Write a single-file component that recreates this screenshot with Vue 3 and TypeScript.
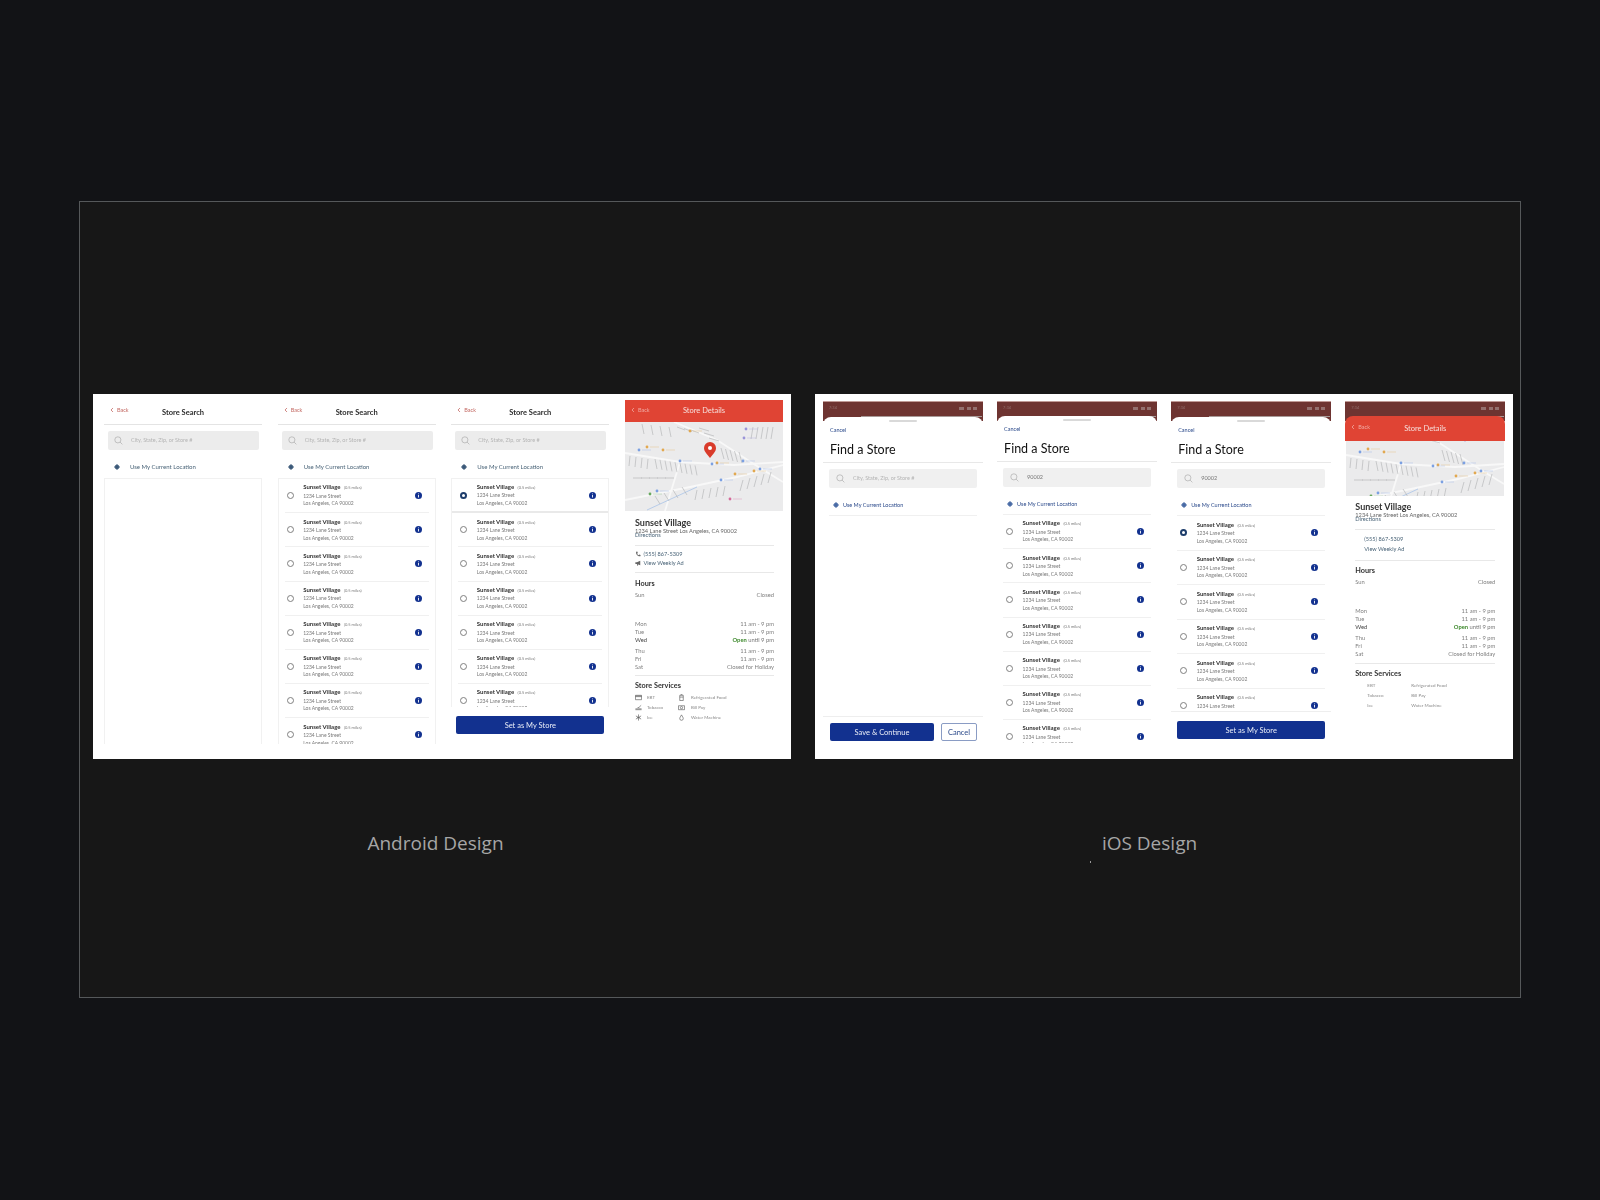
<script setup lang="ts">
type Screen = { rows: number; selected?: boolean; query?: string; cta?: string; mod: string }

const panels: { os: 'android' | 'ios'; screens: Screen[] }[] = [
  {
    os: 'android',
    screens: [
      { rows: 0, mod: 'empty' },
      { rows: 8, mod: 'full' },
      { rows: 7, selected: true, cta: 'Set as My Store', mod: 'picked' }
    ]
  },
  {
    os: 'ios',
    screens: [
      { rows: 0, mod: 'empty' },
      { rows: 7, query: '90002', mod: 'full' },
      { rows: 6, query: '90002', selected: true, cta: 'Set as My Store', mod: 'picked' }
    ]
  }
]

const hoursTop = [{ day: 'Sun', time: 'Closed' }]
const hours = [
  { day: 'Mon', time: '11 am - 9 pm' },
  { day: 'Tue', time: '11 am - 9 pm' },
  { day: 'Wed', time: 'until 9 pm', open: true },
  { day: 'Thu', time: '11 am - 9 pm' },
  { day: 'Fri', time: '11 am - 9 pm' },
  { day: 'Sat', time: 'Closed for Holiday' }
]

const services = [
  { name: 'EBT', d: 'M0.5 1.5h7v5h-7z M0.5 3h7 M.5 2.2h7' },
  { name: 'Refrigerated Food', d: 'M2 1.5h4v6H2z M2 3.5h4 M3 .5h2' },
  { name: 'Tobacco', d: 'M.5 6.5h7 M.5 5.5h7 M3 4h2 M5 3c1-1 1.5-.5 2-1.5' },
  { name: 'Bill Pay', d: 'M.5 2h7v4.5h-7z M4 4.2m-1.3 0a1.3 1.3 0 1 0 2.6 0a1.3 1.3 0 1 0-2.6 0' },
  { name: 'Ice', d: 'M4 .5v7 M1 2.2l6 3.6 M7 2.2l-6 3.6 M2.5 4h3' },
  { name: 'Water Machine', d: 'M4 1C3 3 2 4 2 5.2a2 2 0 0 0 4 0C6 4 5 3 4 1z' }
]

// street blocks on the map, drawn as runs of short parallel strokes
const blocks = [
  { x: 17, y: 2, n: 4, dx: 9, dy: 1, a: 2, b: 10 },
  { x: 52, y: 5, n: 3, dx: 7, dy: 1.5, a: 8, b: 3 },
  { x: 96, y: 26, n: 5, dx: 4.5, dy: 1, a: 3, b: 11 },
  { x: 30, y: 37, n: 9, dx: 5, dy: 0.8, a: 2, b: 10 },
  { x: 5, y: 34, n: 4, dx: 6, dy: 1, a: -1, b: 10 },
  { x: 128, y: 5, n: 5, dx: 5, dy: 0, a: -2, b: 12 },
  { x: 118, y: 58, n: 5, dx: 7, dy: -2, a: -3, b: 11 },
  { x: 72, y: 68, n: 5, dx: 7, dy: -1, a: -2, b: 10 },
  { x: 8, y: 56, n: 5, dx: 8, dy: 0, a: 9, b: 0 },
  { x: 74, y: 6, n: 3, dx: 5, dy: 5, a: 10, b: 3 },
  { x: 30, y: 74, n: 4, dx: 9, dy: -3, a: 5, b: 8 }
]
const streets = blocks.flatMap((b) =>
  Array.from({ length: b.n }, (_, i) => {
    const x = b.x + i * b.dx
    const y = b.y + i * b.dy
    return `M${x} ${y}l${b.a} ${b.b}`
  })
)

const pois = [
  { x: 65, y: 9, c: '#e2a84f' }, { x: 22, y: 25, c: '#e2a84f' }, { x: 38, y: 28, c: '#e2a84f' },
  { x: 92, y: 41, c: '#e2a84f' }, { x: 110, y: 52, c: '#e2a84f' }, { x: 129, y: 49, c: '#e2a84f' },
  { x: 14, y: 28, c: '#7ba0e2' }, { x: 55, y: 39, c: '#7ba0e2' }, { x: 87, y: 42, c: '#7ba0e2' },
  { x: 118, y: 39, c: '#7ba0e2' }, { x: 135, y: 47, c: '#7ba0e2' }, { x: 121, y: 7, c: '#9a94d8' },
  { x: 119, y: 16, c: '#9a94d8' }, { x: 96, y: 58, c: '#7ba0e2' }, { x: 32, y: 69, c: '#7ba0e2' },
  { x: 25, y: 72, c: '#67a85f' }, { x: 105, y: 77, c: '#d56a9a' }
]
</script>

<template>
  <div class="page">
    <div class="frame">
      <div class="panels">
        <section v-for="p in panels" :key="p.os" class="panel" :class="p.os">
          <div v-for="s in p.screens" :key="s.mod" class="screen" :class="[p.os, s.mod]">
            <div v-if="p.os === 'ios'" class="status">
              <span>7:34</span>
              <i class="status-icons"></i>
            </div>

            <div class="sheet">
              <div v-if="p.os === 'android'" class="topbar">
                <span class="back">
                  <svg viewBox="0 0 6 8" width="4" height="6"><path d="M4.5 1 1.5 4l3 3" /></svg>
                  Back
                </span>
                <h2>Store Search</h2>
              </div>
              <div v-else class="sheet-head">
                <i class="handle"></i>
                <a>Cancel</a>
                <h1>Find a Store</h1>
              </div>

              <div class="search">
                <svg viewBox="0 0 10 10" width="9" height="9">
                  <circle cx="4.3" cy="4.3" r="3.4" />
                  <path d="m6.8 6.8 2.5 2.5" />
                </svg>
                <span :class="{ typed: s.query }">{{ s.query || 'City, State, Zip, or Store #' }}</span>
              </div>

              <div class="locate">
                <svg viewBox="0 0 8 8" width="6" height="6">
                  <circle cx="4" cy="4" r="2.6" />
                  <path d="M4 0v8M0 4h8" />
                </svg>
                <span>Use My Current Location</span>
              </div>

              <div class="list">
                <div v-for="n in s.rows" :key="n" class="row" :class="{ on: s.selected && n === 1 }">
                  <i class="radio"></i>
                  <div class="store">
                    <p class="store-name">Sunset Village <small>(0.5 miles)</small></p>
                    <p>1234 Lane Street</p>
                    <p>Los Angeles, CA 90002</p>
                  </div>
                  <svg class="info" viewBox="0 0 8 8" width="7" height="7">
                    <circle cx="4" cy="4" r="4" />
                    <path d="M3.5 1.6h1v1h-1zM3.5 3.4h1v3h-1z" />
                  </svg>
                </div>
              </div>

              <div v-if="s.cta" class="cta"><button class="btn">{{ s.cta }}</button></div>
              <div v-else-if="p.os === 'ios' && s.rows === 0" class="cta split">
                <button class="btn">Save &amp; Continue</button>
                <button class="btn ghost">Cancel</button>
              </div>
            </div>
          </div>

          <div class="screen details" :class="p.os">
            <div v-if="p.os === 'ios'" class="status">
              <span>7:34</span>
              <i class="status-icons"></i>
            </div>
            <div class="redbar">
              <span class="back">
                <svg viewBox="0 0 6 8" width="4" height="6"><path d="M4.5 1 1.5 4l3 3" /></svg>
                Back
              </span>
              <h2>Store Details</h2>
            </div>
            <svg class="map" :viewBox="p.os === 'ios' ? '0 17 158 55' : '0 0 158 89'">
              <rect x="0" y="0" width="158" height="89" fill="#ebebec" />
              <g fill="none" stroke="#f8f8f8" stroke-width="1.8">
                <path d="M49 0 92 18 135 46 158 60" />
                <path d="M0 31 55 40 109 43 158 40" />
                <path d="M0 78 65 65 112 55 158 43" />
                <path d="M55 40 40 89" />
              </g>
              <path d="M22 88 72 65" fill="none" stroke="#a9c4e8" stroke-width="0.8" />
              <path :d="streets.join('')" fill="none" stroke="#aeb0b2" stroke-width="0.6" />
              <g v-for="(m, i) in pois" :key="i">
                <circle :cx="m.x" :cy="m.y" r="1.4" :fill="m.c" />
                <path :d="`M${m.x + 3} ${m.y}h9`" :stroke="m.c" stroke-width="0.6" opacity="0.5" />
              </g>
              <g v-if="p.os === 'android'">
                <path d="M85 36C81 31 79 29 79 26a6 6 0 1 1 12 0C91 29 89 31 85 36Z" fill="#d93b2b" />
                <circle cx="85" cy="26" r="2" fill="#fff" />
              </g>
            </svg>

            <div class="info-body">
              <div class="block addr">
                <h3>Sunset Village</h3>
                <p>1234 Lane Street Los Angeles, CA 90002</p>
                <a>Directions</a>
              </div>
              <div class="block links">
                <div class="link">
                  <svg v-if="p.os === 'android'" viewBox="0 0 8 8" width="6" height="6">
                    <path d="M1.5 1 3 .8 3.8 2.8 2.8 3.5C3.3 4.6 4 5.2 5 5.6L5.7 4.6 7.5 5.4 7.2 7C4 7.5.8 4.5 1.5 1Z" />
                  </svg>
                  <span>(555) 867-5309</span>
                </div>
                <div class="link">
                  <svg v-if="p.os === 'android'" viewBox="0 0 8 8" width="6" height="6">
                    <path d="M.5 3h2L7 1v6L2.5 5.2h-2ZM2.5 5.2 3.2 7.5h1L3.6 5.6Z" />
                  </svg>
                  <span>View Weekly Ad</span>
                </div>
              </div>
              <div class="block hours">
                <h4>Hours</h4>
                <div v-for="h in hoursTop" :key="h.day" class="hour">
                  <span>{{ h.day }}</span><span>{{ h.time }}</span>
                </div>
                <div class="hours-list">
                  <div v-for="h in hours" :key="h.day" class="hour" :class="{ today: h.open }">
                    <span>{{ h.day }}</span>
                    <span><b v-if="h.open">Open</b> {{ h.time }}</span>
                  </div>
                </div>
              </div>
              <div class="services">
                <h4>Store Services</h4>
                <div class="svc-grid">
                  <div v-for="v in services" :key="v.name" class="svc">
                    <span class="svc-icon">
                      <svg v-if="p.os === 'android'" viewBox="0 0 8 8" width="7" height="7"><path :d="v.d" /></svg>
                    </span>
                    {{ v.name }}
                  </div>
                </div>
              </div>
            </div>
          </div>
        </section>
      </div>

      <div class="labels">
        <div class="label left">Android Design</div>
        <div class="label right">iOS Design<i class="speck"></i></div>
      </div>
    </div>
  </div>
</template>

<style>
html,
body {
  margin: 0;
  background: #121316;
}
</style>

<style scoped>
* {
  box-sizing: border-box;
}

.page {
  height: 1200px;
  padding: 201px 0 0 79px;
  background: #121316;
  font-family: Lato, "Open Sans", sans-serif;
  overflow: hidden;
}

.frame {
  width: 1442px;
  height: 797px;
  padding: 192px 0 0 13px;
  background: #171717;
  border: 1px solid #55585a;
}

.panels {
  display: flex;
  gap: 24px;
}

.panel {
  width: 698px;
  height: 365px;
  background: #fff;
  display: flex;
  filter: blur(0.3px);
}
.panel.android {
  padding-left: 11px;
  gap: 15.67px;
}
.panel.ios {
  padding-left: 8px;
  gap: 14.1px;
}

.screen {
  width: 158px;
  height: 365px;
  display: flex;
  flex-direction: column;
  flex: none;
}
.screen.ios {
  width: 160px;
  padding-top: 7px;
}

.sheet {
  flex: 1;
  min-height: 0;
  display: flex;
  flex-direction: column;
}
.screen.android.empty,
.screen.android.full {
  padding-bottom: 15px;
}
.screen.android.picked {
  padding-bottom: 25px;
}

.status {
  height: 20px;
  flex: none;
  padding: 3px 6px 0;
  background: #6e3431;
  border-top: 0.5px solid #c09a96;
  color: #94706e;
  font-size: 4px;
  line-height: 6px;
  display: flex;
  justify-content: space-between;
  position: relative;
}
.status::after {
  content: "";
  position: absolute;
  left: 38px;
  right: 1px;
  bottom: 4px;
  height: 1.5px;
  background: #a89a98;
}
.status-icons {
  width: 18px;
  height: 3px;
  margin-top: 2px;
  background: linear-gradient(90deg, #94706e 30%, transparent 30% 45%, #94706e 45% 65%, transparent 65% 80%, #94706e 80%);
}

.screen.ios .sheet {
  margin-top: -4px;
  background: #fff;
  border-radius: 8px 8px 0 0;
  position: relative;
}
.screen.ios.full {
  padding-bottom: 16px;
}
.screen.ios.full .sheet {
  margin-top: -5px;
}
.screen.ios.picked {
  padding-bottom: 20px;
}

.topbar {
  height: 31px;
  flex: none;
  display: grid;
  grid-template-columns: 1fr auto 1fr;
  align-items: center;
  border-bottom: 1px solid #e4e4e4;
}
.topbar h2 {
  grid-column: 2;
  grid-row: 1;
  margin: 7px 0 0;
  font-size: 7.5px;
  font-weight: 700;
  color: #2b2b2b;
}
.back {
  grid-column: 1;
  grid-row: 1;
  padding-left: 6px;
  display: flex;
  align-items: center;
  gap: 3px;
  font-size: 5.5px;
  color: #c46a64;
  margin-top: 2px;
}
.back svg {
  fill: none;
  stroke: currentColor;
  stroke-width: 1.2;
}

.sheet-head {
  flex: none;
  height: 46px;
  padding: 3px 7px 0;
  border-bottom: 1px solid #e8e8e8;
  display: flex;
  flex-direction: column;
}
.handle {
  width: 28px;
  height: 2px;
  margin: 0 auto;
  background: #d9d9d9;
  border-radius: 1px;
}
.sheet-head a {
  margin-top: 5px;
  font-size: 5.5px;
  line-height: 7px;
  color: #2b4a8b;
}
.sheet-head h1 {
  margin: 6.5px 0 0;
  font-size: 12.5px;
  line-height: 18px;
  font-weight: 400;
  color: #111;
}

.search {
  flex: none;
  height: 19px;
  width: 151px;
  margin: 6px 0 0 4px;
  padding: 0 0 1px 6px;
  display: flex;
  align-items: center;
  gap: 8px;
  background: #ececec;
  border-radius: 2px;
  font-size: 5.5px;
  color: #b4b4b4;
}
.search svg {
  flex: none;
  fill: none;
  stroke: #a5a5a5;
  stroke-width: 0.7;
}
.search .typed {
  color: #777;
}
.screen.ios .search {
  width: 148px;
  margin: 6px 0 0 6px;
  background: #f0f0f0;
  padding-left: 7px;
}

.locate {
  flex: none;
  height: 28px;
  padding: 5px 0 0 10px;
  display: flex;
  align-items: center;
  gap: 10px;
  font-size: 6px;
  color: #4a6478;
}
.locate svg {
  flex: none;
  fill: #3b5a78;
  stroke: #3b5a78;
  stroke-width: 1;
}
.screen.ios .locate {
  margin: 0 6px;
  padding: 7px 0 0 4px;
  gap: 4px;
  font-size: 5.5px;
  color: #2b4a8b;
  border-bottom: 1px solid #f0f0f0;
}
.screen.ios .locate svg {
  fill: #4a6ba5;
  stroke: #4a6ba5;
}

.list {
  flex: 1;
  min-height: 0;
  overflow: hidden;
  border: 1px solid #f1f1f1;
  border-bottom: 0;
}
.screen.ios .list {
  border: 0;
}

.row {
  height: 34.2px;
  margin: 0 6px;
  padding-left: 2px;
  display: grid;
  grid-template-columns: 7px 1fr 7px;
  column-gap: 9.5px;
  padding-right: 6.5px;
  align-items: center;
  border-bottom: 1px solid #f0f0f0;
}
.row.on {
  margin: 0;
  padding-left: 8px;
  padding-right: 12.5px;
  border-bottom: 2px solid #e9e9e9;
}
.screen.ios .row {
  margin: 0 6px;
  padding-left: 3px;
  padding-right: 7.5px;
  border-bottom: 1px solid #f0f0f0;
}
.screen.ios.picked .row {
  height: 34.5px;
}

.radio {
  width: 7px;
  height: 7px;
  border: 0.7px solid #808080;
  border-radius: 50%;
  background: #fff;
}
.row.on .radio {
  border: 2px solid #1d3d6b;
  background: #fff;
}

.store p {
  margin: 0;
  font-size: 5px;
  line-height: 7.5px;
  color: #7a7a7a;
}
.store .store-name {
  font-size: 6px;
  line-height: 9.5px;
  font-weight: 700;
  color: #333;
  margin-top: -1px;
}
.store small {
  margin-left: 2px;
  font-size: 4px;
  font-weight: 400;
  color: #777;
}

.info {
  fill: #12318f;
}
.info path {
  fill: #fff;
}

.cta {
  flex: none;
  height: 27px;
  padding: 9px 5px 0;
}
.cta .btn {
  width: 100%;
}
.screen.ios .cta {
  height: 28px;
  padding: 9px 6px 0;
  border-top: 1px solid #eee;
}
.cta.split {
  display: flex;
  gap: 7px;
}
.cta.split .btn {
  width: 104px;
}
.cta.split .ghost {
  width: 36px;
}
.screen.ios .cta.split {
  height: 43px;
  padding: 6px 6px 19px 7px;
  border-top: 1px solid #eee;
}
.btn {
  display: block;
  height: 18px;
  padding: 0;
  border: 0;
  border-radius: 2px;
  background: #12318f;
  color: #e8ecf6;
  font: 7.5px Lato, sans-serif;
}
.btn.ghost {
  background: #fff;
  border: 1px solid #8a9cc4;
  color: #2b4a8b;
}

/* store details */
.details.android {
  padding-top: 6px;
}
.redbar {
  flex: none;
  height: 22px;
  background: #e04434;
  color: #fff;
  display: grid;
  grid-template-columns: 1fr auto 1fr;
  align-items: center;
}
.redbar h2 {
  grid-column: 2;
  grid-row: 1;
  margin: -2px 0 0;
  font-size: 7.5px;
  font-weight: 400;
  color: #f6dedb;
}
.redbar .back {
  color: #f0a9a2;
  margin: -2px 0 0;
}
.details.ios .redbar {
  height: 25px;
  margin-top: -5px;
  border-radius: 8px 8px 0 0;
  position: relative;
}
.details.ios .redbar h2 {
  margin: 0;
}
.details.ios .redbar .back {
  margin: -3px 0 0;
}
.map {
  display: block;
  flex: none;
  width: 100%;
  height: 89px;
}
.details.ios .map {
  height: 55px;
}

.info-body {
  padding: 7px 9px 0 10px;
}
.details.ios .info-body {
  padding: 6px 10px 0;
}
.block {
  border-bottom: 1px solid #e8e8e8;
}
h3 {
  margin: 0;
  font-size: 9px;
  line-height: 10px;
  color: #333;
}
.addr {
  height: 28px;
}
.addr p {
  margin: 0;
  font-size: 5.7px;
  line-height: 5px;
  color: #666;
}
.addr a {
  display: block;
  font-size: 5.7px;
  line-height: 5px;
  margin-top: -1px;
  color: #4a6478;
}
.links {
  height: 27px;
  padding-top: 3px;
}
.details.ios .links {
  height: 31px;
  padding: 3px 0 0 9px;
}
.link {
  height: 9px;
  display: flex;
  align-items: center;
  gap: 2.5px;
  font-size: 5.6px;
  color: #4a6478;
}
.details.ios .link {
  height: 10px;
}
.link svg {
  fill: #666;
}
.hours {
  padding-top: 6px;
  height: 103px;
}
.details.ios .hours {
  padding-top: 5px;
}
h4 {
  margin: 0;
  font-size: 7.3px;
  line-height: 10px;
  color: #333;
}
.hours h4 {
  margin-bottom: 2px;
}
.hour {
  display: flex;
  justify-content: space-between;
  font-size: 5.8px;
  line-height: 7.8px;
  color: #808080;
}
.hours-list {
  margin-top: 21.5px;
}
.hour.today {
  margin-bottom: 3.5px;
  color: #777;
}
.hour.today > span:first-child {
  color: #444;
}
.hour b {
  color: #3f8a2e;
}
.services {
  padding-top: 5px;
}
.svc-grid {
  display: grid;
  grid-template-columns: 42px 1fr;
  margin-top: 1px;
}
.svc {
  height: 10px;
  display: flex;
  align-items: center;
  font-size: 4.5px;
  color: #8a8a8a;
}
.svc-icon {
  width: 12px;
  flex: none;
  display: flex;
}
.svc:nth-child(even) .svc-icon {
  width: 14px;
  padding-left: 1px;
}
.svc svg {
  fill: none;
  stroke: #666;
  stroke-width: 0.8;
}

.labels {
  display: flex;
  gap: 24px;
  margin-top: 71px;
}
.label {
  width: 698px;
  text-align: center;
  font: 19px/27px "Open Sans", sans-serif;
  color: #a6a6a6;
  position: relative;
}
.label.left {
  padding-right: 13px;
}
.label.right {
  padding-right: 29px;
}
.speck {
  position: absolute;
  left: 275px;
  top: 31px;
  width: 1px;
  height: 2px;
  background: #999;
}
</style>
